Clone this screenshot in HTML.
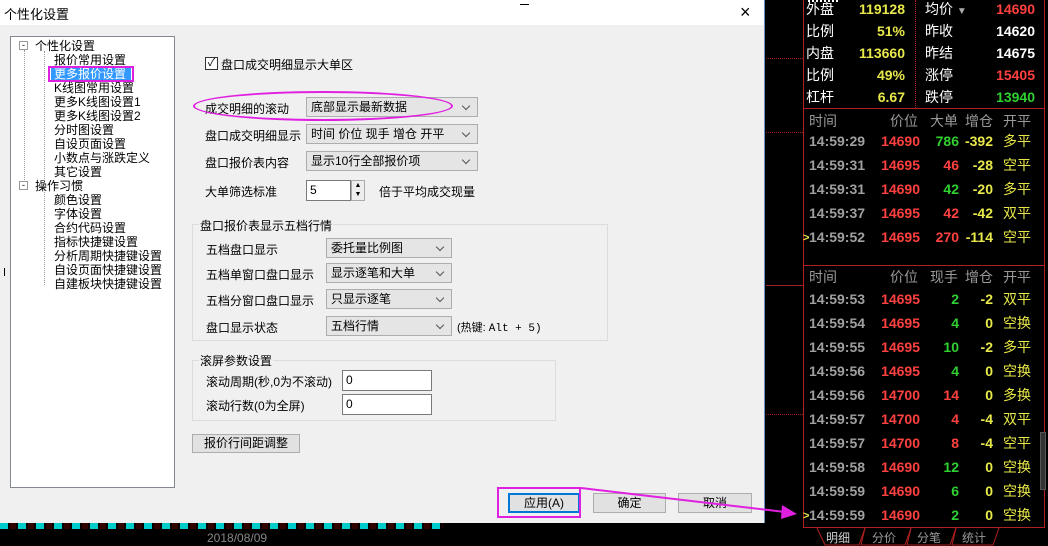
<!DOCTYPE html>
<html><head><meta charset="utf-8"><style>
*{margin:0;padding:0;box-sizing:border-box}
body{width:1048px;height:546px;background:#000;position:relative;overflow:hidden;font-family:"Liberation Sans","Noto Sans CJK SC",sans-serif;font-size:12px;color:#000}
.a{position:absolute;white-space:nowrap}
.dlg{left:0;top:0;width:765px;height:523px;background:#f0f0f0;border-right:1px solid #6a8fc0}
.title{left:0;top:0;width:764px;height:25px;background:#fff}
.tree{left:10px;top:36px;width:165px;height:452px;background:#fff;border:1px solid #828790}
.ti{position:absolute;font-size:12px;line-height:14px}
.sel{position:absolute;height:20px;background:#e5e5e5;border:1px solid #adadad;font-size:12px;line-height:18px;padding-left:4px}
.sel:after{content:"";position:absolute;right:8px;top:5px;width:5px;height:5px;border-right:1px solid #555;border-bottom:1px solid #555;transform:rotate(45deg)}
.inp{position:absolute;height:21px;background:#fff;border:1px solid #7a7a7a;font-size:12px;line-height:19px;padding-left:3px}
.grp{position:absolute;border:1px solid #dcdcdc}
.gt{position:absolute;background:#f0f0f0;font-size:12px;padding:0 1px}
.btn{position:absolute;height:20px;background:#e1e1e1;border:1px solid #adadad;font-size:12px;line-height:18px;text-align:center}
.r{position:absolute;font-size:14px;font-weight:bold;line-height:18px}
.y{color:#e8e84a}.rd{color:#ff4040}.w{color:#fff}.g{color:#30d030}.gr{color:#a0a0a0}.lb{color:#fff;font-weight:normal}
.hd{color:#999;font-weight:normal}
</style></head><body>
<div class="a dlg"></div>
<div class="a title"></div>
<div class="a" style="left:4px;top:4px;font-size:13px">个性化设置</div>
<div class="a" style="left:520px;top:4px;width:9px;height:1px;background:#000"></div>
<div class="a" style="left:740px;top:2px;font-size:18px;font-weight:300">×</div>

<div class="a tree">
<div class="ti" style="left:8px;top:4px;width:9px;height:9px;border:1px solid #999;font-size:9px;line-height:6px;text-align:center">-</div>
<div class="ti" style="left:24px;top:2px">个性化设置</div>
<div class="ti" style="left:13px;top:13px;height:132px;border-left:1px dotted #999"></div>
<div class="ti" style="left:43px;top:16px">报价常用设置</div>
<div class="ti" style="left:37px;top:29px;width:86px;height:16px;border:2px solid #e020e0"></div>
<div class="ti" style="left:40px;top:31px;width:80px;height:12px;background:#3399ff"></div>
<div class="ti" style="left:43px;top:30px;color:#fff">更多报价设置</div>
<div class="ti" style="left:43px;top:44px">K线图常用设置</div>
<div class="ti" style="left:43px;top:58px">更多K线图设置1</div>
<div class="ti" style="left:43px;top:72px">更多K线图设置2</div>
<div class="ti" style="left:43px;top:86px">分时图设置</div>
<div class="ti" style="left:43px;top:100px">自设页面设置</div>
<div class="ti" style="left:43px;top:114px">小数点与涨跌定义</div>
<div class="ti" style="left:43px;top:128px">其它设置</div>
<div class="ti" style="left:8px;top:144px;width:9px;height:9px;border:1px solid #999;font-size:9px;line-height:6px;text-align:center">-</div>
<div class="ti" style="left:24px;top:142px">操作习惯</div>
<div class="ti" style="left:43px;top:156px">颜色设置</div>
<div class="ti" style="left:43px;top:170px">字体设置</div>
<div class="ti" style="left:43px;top:184px">合约代码设置</div>
<div class="ti" style="left:43px;top:198px">指标快捷键设置</div>
<div class="ti" style="left:43px;top:212px">分析周期快捷键设置</div>
<div class="ti" style="left:43px;top:226px">自设页面快捷键设置</div>
<div class="ti" style="left:43px;top:240px">自建板块快捷键设置</div>
<div class="ti" style="left:33px;top:14px;height:234px;border-left:1px dotted #999"></div>
</div>
<div class="a" style="left:4px;top:268px;width:1px;height:8px;background:#000"></div>

<div class="a" style="left:205px;top:57px;width:13px;height:13px;border:1px solid #333;background:#fff;font-size:11px;line-height:11px;text-align:center">✓</div>
<div class="a" style="left:221px;top:56px;font-size:12px">盘口成交明细显示大单区</div>

<div class="a" style="left:205px;top:100px">成交明细的滚动</div>
<div class="sel" style="left:306px;top:97px;width:172px">底部显示最新数据</div>
<div class="a" style="left:193px;top:91px;width:260px;height:30px;border:2px solid #e020e0;border-radius:50%"></div>
<div class="a" style="left:205px;top:127px">盘口成交明细显示</div>
<div class="sel" style="left:306px;top:124px;width:172px">时间 价位 现手 增仓 开平</div>
<div class="a" style="left:205px;top:154px">盘口报价表内容</div>
<div class="sel" style="left:306px;top:151px;width:172px">显示10行全部报价项</div>
<div class="a" style="left:205px;top:183px">大单筛选标准</div>
<div class="inp" style="left:306px;top:180px;width:45px">5</div>
<div class="a" style="left:351px;top:180px;width:14px;height:21px;border:1px solid #aaa;background:#eee;font-size:7px;line-height:9px;text-align:center">▲<br>▼</div>
<div class="a" style="left:379px;top:183px">倍于平均成交现量</div>

<div class="grp" style="left:192px;top:224px;width:416px;height:117px"></div>
<div class="gt" style="left:199px;top:217px">盘口报价表显示五档行情</div>
<div class="a" style="left:206px;top:241px">五档盘口显示</div>
<div class="sel" style="left:326px;top:238px;width:126px">委托量比例图</div>
<div class="a" style="left:206px;top:266px">五档单窗口盘口显示</div>
<div class="sel" style="left:326px;top:263px;width:126px">显示逐笔和大单</div>
<div class="a" style="left:206px;top:292px">五档分窗口盘口显示</div>
<div class="sel" style="left:326px;top:289px;width:126px">只显示逐笔</div>
<div class="a" style="left:206px;top:319px">盘口显示状态</div>
<div class="sel" style="left:326px;top:316px;width:126px">五档行情</div>
<div class="a" style="left:457px;top:319px;font-size:11px">(热键: <span style="font-family:'Liberation Mono'">Alt + 5)</span></div>

<div class="grp" style="left:192px;top:360px;width:364px;height:61px"></div>
<div class="gt" style="left:199px;top:352px">滚屏参数设置</div>
<div class="a" style="left:206px;top:373px">滚动周期(秒,0为不滚动)</div>
<div class="inp" style="left:342px;top:370px;width:90px">0</div>
<div class="a" style="left:206px;top:397px">滚动行数(0为全屏)</div>
<div class="inp" style="left:342px;top:394px;width:90px">0</div>
<div class="btn" style="left:192px;top:434px;width:108px;height:19px;line-height:17px">报价行间距调整</div>

<div class="btn" style="left:508px;top:493px;width:72px;border:2px solid #0078d7;line-height:16px">应用(A)</div>
<div class="a" style="left:497px;top:487px;width:84px;height:31px;border:2px solid #e020e0"></div>
<div class="btn" style="left:593px;top:493px;width:73px">确定</div>
<div class="btn" style="left:678px;top:493px;width:74px">取消</div>

<!-- bottom strip -->
<div class="a" style="left:0;top:523px;width:443px;height:6px;background:repeating-linear-gradient(90deg,#0cc 0 8px,#000 8px 10px,#300 10px 16px,#000 16px 18px)"></div>
<div class="a" style="left:207px;top:531px;color:#888;font-size:12px">2018/08/09</div>

<!-- black gap dotted lines -->
<div class="a" style="left:766px;top:58px;width:37px;border-top:1px dotted #a02020"></div>
<div class="a" style="left:766px;top:132px;width:37px;border-top:1px dotted #a02020"></div>
<div class="a" style="left:766px;top:285px;width:37px;border-top:1px solid #a02020"></div>
<div class="a" style="left:766px;top:414px;width:37px;border-top:1px dotted #a02020"></div>

<!-- right panel -->
<div class="a" style="left:803px;top:0;width:1px;height:528px;background:#b02020"></div>
<div class="a" style="left:1044px;top:0;width:1px;height:528px;background:#b02020"></div>
<div class="a" style="left:803px;top:108px;width:242px;height:1px;background:#b02020"></div>
<div class="a" style="left:803px;top:265px;width:242px;height:1px;background:#b02020"></div>
<div class="a" style="left:803px;top:527px;width:242px;height:1px;background:#b02020"></div>
<div class="a" style="left:915px;top:0;height:108px;border-left:1px dotted #b02020"></div>
<div class="a" style="left:808px;top:0;width:30px;border-top:2px dotted #fff"></div>

<div class="r lb" style="left:806px;top:0">外盘</div><div class="r y" style="left:850px;width:55px;text-align:right;top:0">119128</div>
<div class="r lb" style="left:925px;top:0">均价 <span style="font-size:10px;color:#aaa">▼</span></div><div class="r rd" style="left:980px;width:55px;text-align:right;top:0">14690</div>
<div class="r lb" style="left:806px;top:22px">比例</div><div class="r y" style="left:850px;width:55px;text-align:right;top:22px">51%</div>
<div class="r lb" style="left:925px;top:22px">昨收</div><div class="r w" style="left:980px;width:55px;text-align:right;top:22px">14620</div>
<div class="r lb" style="left:806px;top:44px">内盘</div><div class="r y" style="left:850px;width:55px;text-align:right;top:44px">113660</div>
<div class="r lb" style="left:925px;top:44px">昨结</div><div class="r w" style="left:980px;width:55px;text-align:right;top:44px">14675</div>
<div class="r lb" style="left:806px;top:66px">比例</div><div class="r y" style="left:850px;width:55px;text-align:right;top:66px">49%</div>
<div class="r lb" style="left:925px;top:66px">涨停</div><div class="r rd" style="left:980px;width:55px;text-align:right;top:66px">15405</div>
<div class="r lb" style="left:806px;top:88px">杠杆</div><div class="r y" style="left:850px;width:55px;text-align:right;top:88px">6.67</div>
<div class="r lb" style="left:925px;top:88px">跌停</div><div class="r g" style="left:980px;width:55px;text-align:right;top:88px">13940</div>

<div class="r hd" style="left:809px;top:112px">时间</div>
<div class="r hd" style="left:890px;top:112px">价位</div>
<div class="r hd" style="left:930px;top:112px">大单</div>
<div class="r hd" style="left:965px;top:112px">增仓</div>
<div class="r hd" style="left:1003px;top:112px">开平</div>

<div class="r hd" style="left:809px;top:268px">时间</div>
<div class="r hd" style="left:890px;top:268px">价位</div>
<div class="r hd" style="left:930px;top:268px">现手</div>
<div class="r hd" style="left:965px;top:268px">增仓</div>
<div class="r hd" style="left:1003px;top:268px">开平</div>

<div id="rows"></div>
<script>
var A=[["14:59:29","14690","786","g","-392","多平"],["14:59:31","14695","46","rd","-28","空平"],["14:59:31","14690","42","g","-20","多平"],["14:59:37","14695","42","rd","-42","双平"],["14:59:52","14695","270","rd","-114","空平"]];
var B=[["14:59:53","14695","2","g","-2","双平"],["14:59:54","14695","4","g","0","空换"],["14:59:55","14695","10","g","-2","多平"],["14:59:56","14695","4","g","0","空换"],["14:59:56","14700","14","rd","0","多换"],["14:59:57","14700","4","rd","-4","双平"],["14:59:57","14700","8","rd","-4","空平"],["14:59:58","14690","12","g","0","空换"],["14:59:59","14690","6","g","0","空换"],["14:59:59","14690","2","g","0","空换"]];
var h="";
function row(d,y){h+='<div class="r gr" style="left:809px;top:'+y+'px">'+d[0]+'</div><div class="r rd" style="left:870px;width:50px;text-align:right;top:'+y+'px">'+d[1]+'</div><div class="r '+d[3]+'" style="left:920px;width:39px;text-align:right;top:'+y+'px">'+d[2]+'</div><div class="r y" style="left:960px;width:33px;text-align:right;top:'+y+'px">'+d[4]+'</div><div class="r y" style="left:1003px;top:'+y+'px;font-weight:normal">'+d[5]+'</div>';}
A.forEach(function(d,i){row(d,132+i*24)});
B.forEach(function(d,i){row(d,290+i*24)});
document.getElementById("rows").innerHTML=h;
</script>
<div class="r y" style="left:803px;top:229px;font-size:11px">&gt;</div>
<div class="r y" style="left:803px;top:507px;font-size:11px">&gt;</div>
<div class="a" style="left:1040px;top:432px;width:6px;height:58px;background:#333;border:1px solid #555"></div>

<!-- tabs -->
<svg class="a" style="left:815px;top:527px" width="190" height="19"><g fill="none" stroke="#b02020"><path d="M2 1 L10 18 L44 18 L50 1"/><path d="M50 1 L46 18 L90 18 L96 1"/><path d="M96 1 L92 18 L135 18 L141 1"/><path d="M141 1 L137 18 L178 18 L184 1"/></g></svg>
<div class="a" style="left:826px;top:529px;color:#ccc;font-size:12px">明细</div>
<div class="a" style="left:872px;top:529px;color:#999;font-size:12px">分价</div>
<div class="a" style="left:917px;top:529px;color:#999;font-size:12px">分笔</div>
<div class="a" style="left:962px;top:529px;color:#999;font-size:12px">统计</div>

<svg class="a" style="left:0;top:0" width="1048" height="546"><path d="M581 488 L785 512" stroke="#e020e0" stroke-width="2"/><path d="M782 505 L797 514 L781 519 Z" fill="#e020e0"/></svg>
</body></html>
